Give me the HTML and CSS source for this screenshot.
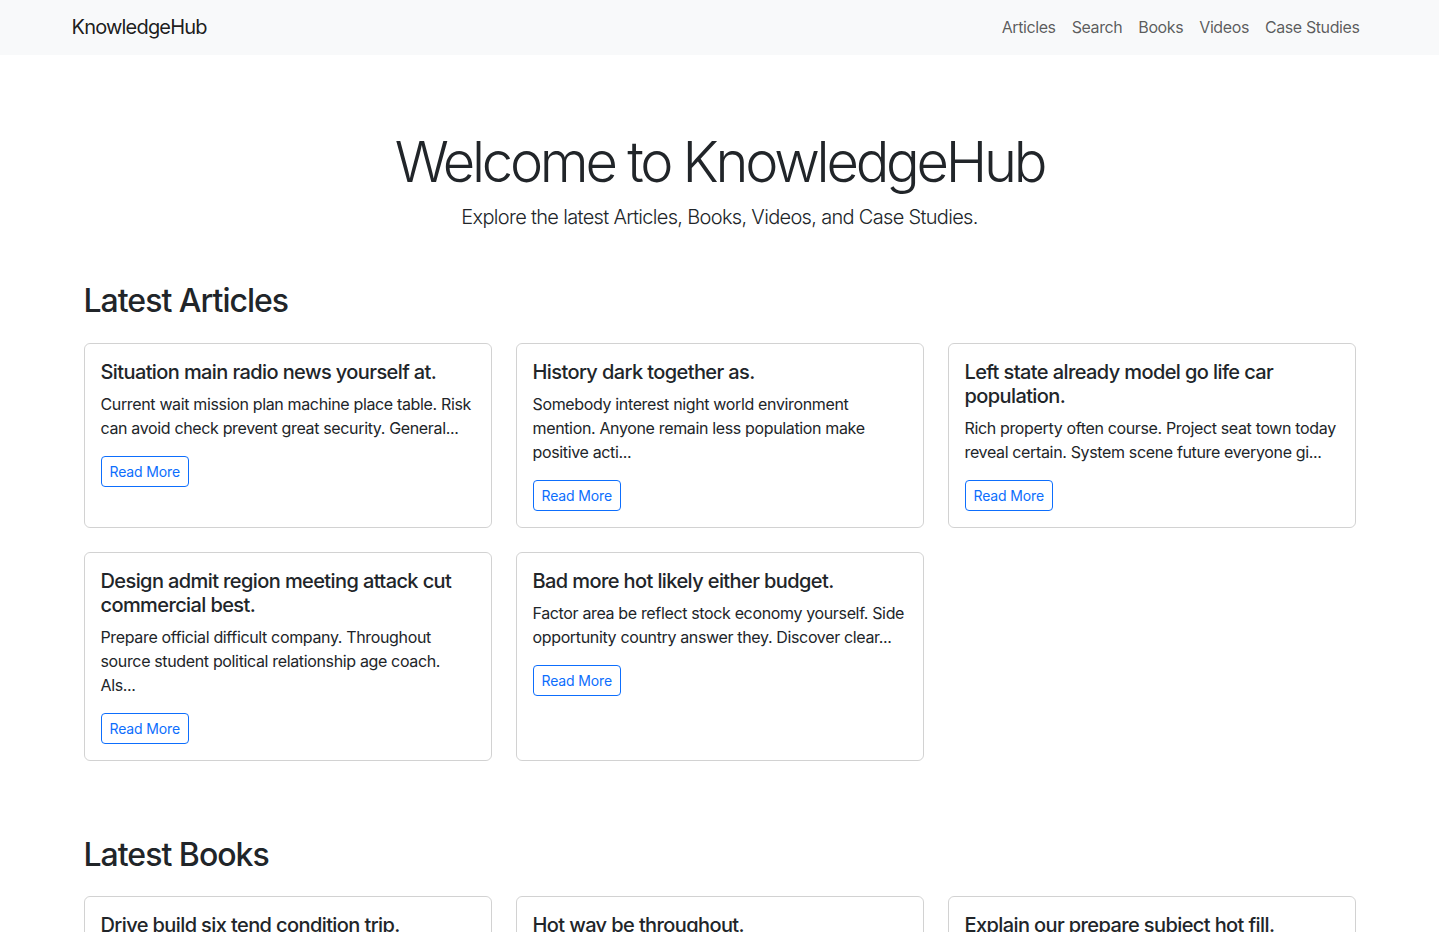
FILE: index.html
```html
<!DOCTYPE html>
<html lang="en">
<head>
<meta charset="utf-8">
<title>KnowledgeHub</title>
<link rel="stylesheet" href="styles.css">
</head>
<body>
<nav class="navbar">
  <div class="nav-inner">
    <a class="brand" href="#">KnowledgeHub</a>
    <ul class="nav-links">
      <li><a href="#">Articles</a></li>
      <li><a href="#">Search</a></li>
      <li><a href="#">Books</a></li>
      <li><a href="#">Videos</a></li>
      <li><a href="#">Case Studies</a></li>
    </ul>
  </div>
</nav>
<main class="main">
  <header class="hero">
    <h1 class="hero-title">Welcome to KnowledgeHub</h1>
    <p class="hero-lead">Explore the latest Articles, Books, Videos, and Case Studies.</p>
  </header>

  <section class="section">
    <h2 class="section-title">Latest Articles</h2>
    <div class="grid">
      <div class="card">
        <h5 class="card-title">Situation main radio news yourself at.</h5>
        <p class="card-text">Current wait mission plan machine place table. Risk can avoid check prevent great security. General...</p>
        <a class="btn" href="#">Read More</a>
      </div>
      <div class="card">
        <h5 class="card-title">History dark together as.</h5>
        <p class="card-text">Somebody interest night world environment mention. Anyone remain less population make positive acti...</p>
        <a class="btn" href="#">Read More</a>
      </div>
      <div class="card">
        <h5 class="card-title">Left state already model go life car population.</h5>
        <p class="card-text">Rich property often course. Project seat town today reveal certain. System scene future everyone gi...</p>
        <a class="btn" href="#">Read More</a>
      </div>
      <div class="card">
        <h5 class="card-title">Design admit region meeting attack cut commercial best.</h5>
        <p class="card-text">Prepare official difficult company. Throughout source student political relationship age coach. Als...</p>
        <a class="btn" href="#">Read More</a>
      </div>
      <div class="card">
        <h5 class="card-title">Bad more hot likely either budget.</h5>
        <p class="card-text">Factor area be reflect stock economy yourself. Side opportunity country answer they. Discover clear...</p>
        <a class="btn" href="#">Read More</a>
      </div>
    </div>
  </section>

  <section class="section">
    <h2 class="section-title">Latest Books</h2>
    <div class="grid">
      <div class="card">
        <h5 class="card-title">Drive build six tend condition trip.</h5>
        <p class="card-text">Author: Michael Johnson</p>
        <a class="btn" href="#">Read More</a>
      </div>
      <div class="card">
        <h5 class="card-title">Hot way be throughout.</h5>
        <p class="card-text">Author: Sarah Williams</p>
        <a class="btn" href="#">Read More</a>
      </div>
      <div class="card">
        <h5 class="card-title">Explain our prepare subject hot fill.</h5>
        <p class="card-text">Author: David Brown</p>
        <a class="btn" href="#">Read More</a>
      </div>
    </div>
  </section>
</main>
</body>
</html>
```

FILE: styles.css
```css
* { box-sizing: border-box; }

body {
  margin: 0;
  font-family: Inter, "Helvetica Neue", Arial, sans-serif;
  font-size: 16px;
  line-height: 1.5;
  color: #212529;
  background: #fff;
}

.navbar {
  background: #f8f9fa;
  height: 55px;
  display: flex;
  align-items: center;
}

.nav-inner {
  width: 1320px;
  margin: 0 auto;
  padding: 0 12px;
  display: flex;
  align-items: center;
  justify-content: space-between;
}

.brand {
  font-size: 20px;
  letter-spacing: -0.04em;
  color: rgba(0, 0, 0, 0.9);
  text-decoration: none;
  line-height: 30px;
  margin-top: -2px;
}

.nav-links {
  list-style: none;
  margin: -2px 0 0;
  padding: 0;
  display: flex;
}

.nav-links a {
  display: block;
  padding: 8px;
  color: rgba(0, 0, 0, 0.65);
  text-decoration: none;
  font-size: 16px;
  letter-spacing: -0.025em;
}

.main {
  width: 1272px;
  margin: 0 auto;
}

.hero {
  text-align: center;
  padding: 74px 0 50px;
}

.hero-title {
  margin: 0 0 6px;
  font-size: 56px;
  font-weight: 300;
  line-height: 1.2;
  letter-spacing: -0.058em;
}

.hero-lead {
  margin: 0;
  font-size: 20px;
  font-weight: 300;
  line-height: 1.5;
  letter-spacing: -0.034em;
}

.section {
  margin-bottom: 75px;
}

.section-title {
  margin: 0 0 22px;
  font-size: 32px;
  font-weight: 500;
  line-height: 1.2;
  letter-spacing: -0.031em;
}

.grid {
  display: grid;
  grid-template-columns: repeat(3, 1fr);
  gap: 24px;
}

.card {
  border: 1px solid rgba(0, 0, 0, 0.175);
  border-radius: 6px;
  padding: 16px;
  display: flex;
  flex-direction: column;
  align-items: flex-start;
}

.card-title {
  margin: 0 0 8px;
  font-size: 20px;
  font-weight: 500;
  line-height: 1.2;
  letter-spacing: -0.03em;
}

.card-text {
  margin: 0 0 16px;
  letter-spacing: -0.022em;
}

.btn {
  display: inline-block;
  padding: 4px 8px;
  font-size: 14px;
  line-height: 1.5;
  color: #0d6efd;
  border: 1px solid #0d6efd;
  border-radius: 4px;
  text-decoration: none;
  letter-spacing: -0.01em;
}
```
